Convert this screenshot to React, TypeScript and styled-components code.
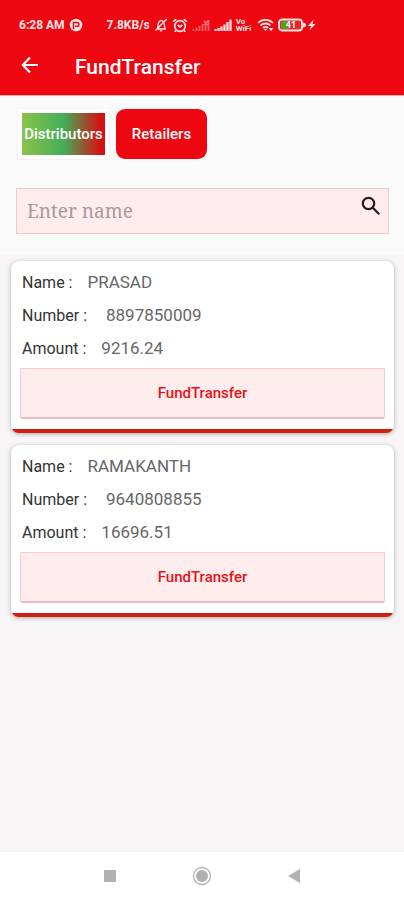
import React, { useState } from "react";
import styled, { createGlobalStyle } from "styled-components";

const GlobalStyle = createGlobalStyle`
  * { box-sizing: border-box; }
  body {
    margin: 0;
    background: #f7f5f6;
    font-family: Roboto, "Liberation Sans", sans-serif;
  }
  button, input { font: inherit; }
`;

const Page = styled.div`
  min-height: 100vh;
  display: flex;
  flex-direction: column;
  background: #f7f5f6;
`;

const Header = styled.header`
  background: #ee0611;
  color: #fff;
  border-bottom: 1px solid #f9a9ac;
`;

const StatusBar = styled.div`
  height: 36px;
  padding: 14px 0 0 19px;
  display: flex;
  align-items: center;
  gap: 4px;
  color: #ffe3e3;
  font-size: 12px;
  font-weight: 700;
  line-height: 20px;
  white-space: nowrap;

  svg { display: block; flex: none; }
`;

const NetSpeed = styled.span`
  margin-left: 20px;
`;

const TitleBar = styled.div`
  height: 59px;
  padding: 2px 16px 0;
  display: flex;
  align-items: center;
  gap: 32px;
`;

const BackButton = styled.button`
  width: 27px;
  height: 32px;
  padding: 0 0 3px;
  display: grid;
  place-items: center;
  border: 0;
  background: none;
  color: inherit;
`;

const Title = styled.h1`
  margin: 0;
  font-size: 21px;
  line-height: 28px;
  font-weight: 500;
`;

const Filters = styled.section`
  padding: 13px 15px 21px 18px;
  background: #fafafa;
`;

const Tabs = styled.div`
  display: flex;
  gap: 7px;
  margin-bottom: 29px;
`;

const Tab = styled.button<{ $framed?: boolean }>`
  height: 50px;
  min-width: 91px;
  padding: 0;
  border: ${(p) => (p.$framed ? "4px solid #fff" : "0")};
  border-radius: ${(p) => (p.$framed ? "1px" : "9px")};
  background: ${(p) =>
    p.$framed
      ? "linear-gradient(90deg, #8bc34a 0%, #43ae59 50%, #d80f12 95%) padding-box"
      : "#ee0611"};
  box-shadow: ${(p) => (p.$framed ? "0 0 2px #d8dcd8" : "none")};
  color: #fff;
  font-size: 15px;
  font-weight: 500;
  white-space: nowrap;
`;

const SearchBox = styled.label`
  height: 46px;
  margin-left: -2px;
  padding: 0 7px 0 10px;
  display: flex;
  align-items: center;
  border: 1px solid #fbc6cb;
  background: #ffeced;

  svg { flex: none; align-self: flex-start; margin-top: 6px; }
`;

const SearchInput = styled.input`
  flex: 1;
  min-width: 0;
  padding: 0;
  border: 0;
  outline: 0;
  background: transparent;
  color: #333;
  font-family: "Noto Serif", "DejaVu Serif", serif;
  font-size: 19px;

  &::placeholder { color: #a79c9d; opacity: 1; }
`;

const CardList = styled.main`
  flex: 1;
  padding: 6px 10px 16px 11px;
  display: flex;
  flex-direction: column;
  gap: 12px;
`;

const Card = styled.article`
  padding: 5px 9px 14px;
  border-radius: 8px;
  background: linear-gradient(#d01f10, #d01f10) bottom / 100% 4px no-repeat #fff;
  box-shadow: 0 1px 4px rgba(0, 0, 0, 0.32);
`;

const Details = styled.dl`
  margin: 0 0 3px;
  padding-left: 2px;
`;

const Field = styled.div<{ $gap: number }>`
  display: flex;
  gap: ${(p) => p.$gap}px;
  font-size: 16px;
  line-height: 33px;
`;

const Label = styled.dt`
  color: #343434;
`;

const Value = styled.dd`
  margin: 0;
  color: #666;
  font-size: 17px;
`;

const TransferButton = styled.button`
  display: block;
  width: 100%;
  height: 51px;
  padding: 0;
  border: 1px solid #f5cdd1;
  border-bottom: 2px solid #e9bdc3;
  border-radius: 2px;
  background: #ffeced;
  color: #eb1119;
  font-size: 15px;
  font-weight: 500;
`;

const SystemNav = styled.nav`
  height: 48px;
  padding: 0 98px;
  display: flex;
  align-items: center;
  justify-content: space-between;
  background: #fff;
`;

const NavButton = styled.button`
  width: 24px;
  height: 24px;
  padding: 0;
  display: grid;
  place-items: center;
  border: 0;
  background: none;
`;

const StatusIcons = () => (
  <>
    <svg width="14" height="14" viewBox="0 0 13 14" fill="none" stroke="currentColor" strokeWidth="1.3" aria-label="Silent">
      <path d="M2 11h9.5M3 10.5C3.8 7 3 3 6.8 2.4c3.4.2 2.8 4.6 3.7 8.1M5.3 12.8h2.4M1 12.5 12.3 1" />
    </svg>
    <svg width="16" height="15" viewBox="0 0 15 14" fill="none" stroke="currentColor" strokeWidth="1.6" aria-label="Alarm">
      <circle cx="7.5" cy="7.5" r="5" />
      <path d="M1 3.3 4 1M14 3.3 11 1M5.2 6.5l2.3 1.8 2.2-1.8M3.8 11.5l-1 1.5M11.2 11.5l1 1.5" />
    </svg>
    <svg width="18" height="14" viewBox="0 0 18 14" fill="none" stroke="currentColor" strokeWidth="1.8" opacity="0.42" aria-label="No signal">
      <path d="M1.5 13v-2M4.5 13V9.5M7.5 13V8M10.5 13V6M13.5 13V4M16.5 13V2M12 3l4 4M16 3l-4 4" />
    </svg>
    <svg width="18" height="14" viewBox="0 0 18 14" fill="none" stroke="currentColor" strokeWidth="2.3" aria-label="Signal">
      <path d="M1.5 13v-2M4.5 13v-3M7.5 13V8.5M10.5 13V6.5M13.5 13V4M16.5 13V1.5" />
    </svg>
  </>
);

const VoWifi = styled.span`
  width: 17px;
  font-size: 8px;
  line-height: 7px;
  font-weight: 700;
  white-space: normal;
`;

const BatteryLabel = styled.span`
  display: flex;
  align-items: center;
  gap: 1px;
`;

const PowerIcons = () => (
  <>
    <svg width="17" height="14" viewBox="0 0 17 14" fill="none" stroke="currentColor" strokeWidth="1.8" aria-label="Wi-Fi">
      <path d="M1 5c4-4.2 11-4.2 15 0M3.5 7.5c2.6-2.7 7.4-2.7 10 0M6 10c1.3-1.4 3.7-1.4 5 0" />
      <path d="m8.5 13-2-2.2h4zM11.500 10l2.500 3.200 2.500-3.200z" fill="currentColor" stroke="none" />
    </svg>
    <BatteryLabel>
      <svg width="28" height="14" viewBox="0 0 28 14" aria-label="Battery 41 percent">
        <rect x="1" y="1.500" width="23" height="11" rx="3" fill="#e9262b" stroke="#ffe3e3" strokeWidth="1.8" />
        <path d="M4.5 3h6v8h-6q-1.500-.5-1.500-2V5q0-1.500 1.500-2z" fill="#4fa31d" />
        <path d="M25 4.500q3 0 3 2.500t-3 2.500z" fill="#ffe3e3" />
        <text x="13" y="10" textAnchor="middle" fill="#fff" fontFamily="Roboto, sans-serif" fontSize="9" fontWeight="700">41</text>
      </svg>
      <svg width="9" height="14" viewBox="0 0 9 14" fill="currentColor" aria-label="Charging">
        <path d="M6.500 1.500 1 8h3L2.500 12.500 8.500 6h-3z" />
      </svg>
    </BatteryLabel>
  </>
);

type Account = { name: string; number: string; amount: string };

const accounts: Account[] = [
  { name: "PRASAD", number: "8897850009", amount: "9216.24" },
  { name: "RAMAKANTH", number: "9640808855", amount: "16696.51" },
];

const AccountCard = ({ name, number, amount }: Account) => (
  <Card>
    <Details>
      <Field $gap={15}><Label>Name :</Label><Value>{name}</Value></Field>
      <Field $gap={19}><Label>Number :</Label><Value>{number}</Value></Field>
      <Field $gap={15}><Label>Amount :</Label><Value>{amount}</Value></Field>
    </Details>
    <TransferButton type="button">FundTransfer</TransferButton>
  </Card>
);

export default function App() {
  const [query, setQuery] = useState("");

  return (
    <Page>
      <GlobalStyle />
      <Header>
        <StatusBar>
          <span>6:28 AM</span>
          <svg width="14" height="14" viewBox="0 0 14 14" aria-label="App notification">
            <circle cx="7" cy="7" r="6.300" fill="currentColor" />
            <path d="M4.500 11V4.500h3.500a1.800 1.800 0 0 1 0 3.800H6" fill="none" stroke="#ee0611" strokeWidth="1.500" />
          </svg>
          <NetSpeed>7.8KB/s</NetSpeed>
          <StatusIcons />
          <VoWifi>Vo WiFi</VoWifi>
          <PowerIcons />
        </StatusBar>
        <TitleBar>
          <BackButton type="button" aria-label="Back">
            <svg width="18" height="18" viewBox="0 0 18 18" fill="none" stroke="currentColor" strokeWidth="2.200">
              <path d="M17 9H2M9 1.500 1.800 9 9 16.500" />
            </svg>
          </BackButton>
          <Title>FundTransfer</Title>
        </TitleBar>
      </Header>

      <Filters>
        <Tabs>
          <Tab type="button" $framed>Distributors</Tab>
          <Tab type="button">Retailers</Tab>
        </Tabs>
        <SearchBox>
          <SearchInput
            type="text"
            aria-label="Enter name"
            placeholder="Enter name"
            value={query}
            onChange={(e) => setQuery(e.target.value)}
          />
          <svg width="20" height="22" viewBox="0 0 20 22" fill="none" stroke="#231b1c" strokeWidth="2.200" aria-hidden="true">
            <circle cx="7.500" cy="8.500" r="5.700" />
            <path d="m11.800 12.800 6.400 6.400" />
          </svg>
        </SearchBox>
      </Filters>

      <CardList>
        {accounts.map((account) => (
          <AccountCard key={account.number} {...account} />
        ))}
      </CardList>

      <SystemNav aria-label="System navigation">
        <NavButton type="button" aria-label="Recent apps">
          <svg width="14" height="14" viewBox="0 0 14 14"><rect x="1" y="1" width="12" height="12" rx="1" fill="#b1b1b1" /></svg>
        </NavButton>
        <NavButton type="button" aria-label="Home">
          <svg width="20" height="20" viewBox="0 0 20 20">
            <circle cx="10" cy="10" r="8.500" fill="none" stroke="#b4b4b4" strokeWidth="1.300" />
            <circle cx="10" cy="10" r="6" fill="#b1b1b1" />
          </svg>
        </NavButton>
        <NavButton type="button" aria-label="Back">
          <svg width="14" height="14" viewBox="0 0 14 14"><path d="M13 0v14L1 7z" fill="#b1b1b1" /></svg>
        </NavButton>
      </SystemNav>
    </Page>
  );
}
